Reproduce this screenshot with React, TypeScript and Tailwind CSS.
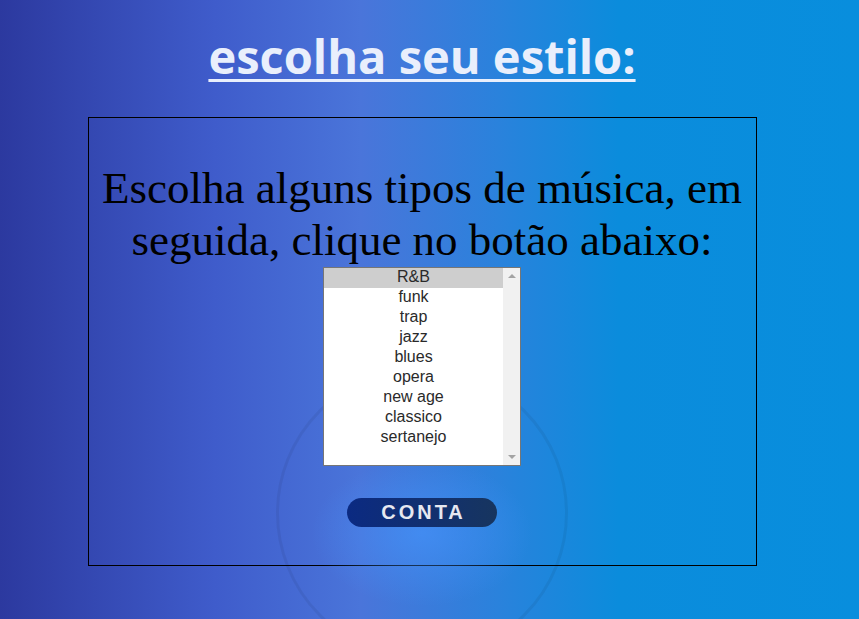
const estilos = ["R&B", "funk", "trap", "jazz", "blues", "opera", "new age", "classico", "sertanejo"];

export default function App() {
  return (
    <div className="relative h-[619px] w-full overflow-hidden bg-[linear-gradient(90deg,#2c399f_0%,#3f5ccb_25%,#4a75da_42%,#2a82dc_58%,#0b8cdc_72%,#088edd_100%)]">
      <div className="flex w-[844px] flex-col items-center">
        <h1
          className="mt-[25px] text-[47px] font-bold leading-[63px] text-[#e9effc] underline decoration-[3px] underline-offset-[5px] [font-variant-ligatures:none]"
          style={{ fontFamily: "'Open Sans', Lato, sans-serif" }}
        >
          escolha seu estilo:
        </h1>

        <div className="relative mt-[29px] flex h-[449px] w-[669px] flex-col items-center border border-black">
          {/* anel e brilho atras do botao */}
          <div className="pointer-events-none absolute left-1/2 top-[249px] h-[292px] w-[292px] -translate-x-1/2 rounded-full border-[3px] border-black/[0.06]" />
          <div className="pointer-events-none absolute left-1/2 top-[335px] h-[160px] w-[240px] -translate-x-1/2 rounded-full bg-[radial-gradient(ellipse_at_center,rgba(70,150,255,0.6),transparent_65%)]" />

          <p
            className="relative mt-[45px] text-center text-[45px] leading-[51.75px] text-black"
            style={{ fontFamily: "'Liberation Serif', serif" }}
          >
            Escolha alguns tipos de música, em
            <br />
            seguida, clique no botão abaixo:
          </p>

          <div
            className="relative flex h-[199px] w-[198px] border border-[#767676] bg-white text-[16px] leading-[20px] text-[#2a2a2a]"
            style={{ fontFamily: "'Liberation Sans', Arial, sans-serif" }}
          >
            <ul className="flex-1">
              {estilos.map((e, i) => (
                <li
                  key={e}
                  className={`h-[20px] text-center leading-[18px] ${i === 0 ? "bg-[#cecece]" : ""}`}
                >
                  {e}
                </li>
              ))}
            </ul>
            <div className="flex w-[17px] flex-col items-center justify-between bg-[#f1f1f1] py-[6px]">
              <div className="h-0 w-0 border-x-[4px] border-b-[4px] border-x-transparent border-b-[#a3a3a3]" />
              <div className="h-0 w-0 border-x-[4px] border-t-[4px] border-x-transparent border-t-[#a3a3a3]" />
            </div>
          </div>

          <button
            className="relative mt-[32px] h-[29px] w-[150px] rounded-full bg-[linear-gradient(90deg,#0b2a82,#17355f)] pl-[3px] text-[20px] font-bold leading-[29px] tracking-[3px] text-[#e6e8f0]"
            style={{ fontFamily: "'Liberation Sans', Arial, sans-serif" }}
          >
            CONTA
          </button>
        </div>
      </div>
    </div>
  );
}
